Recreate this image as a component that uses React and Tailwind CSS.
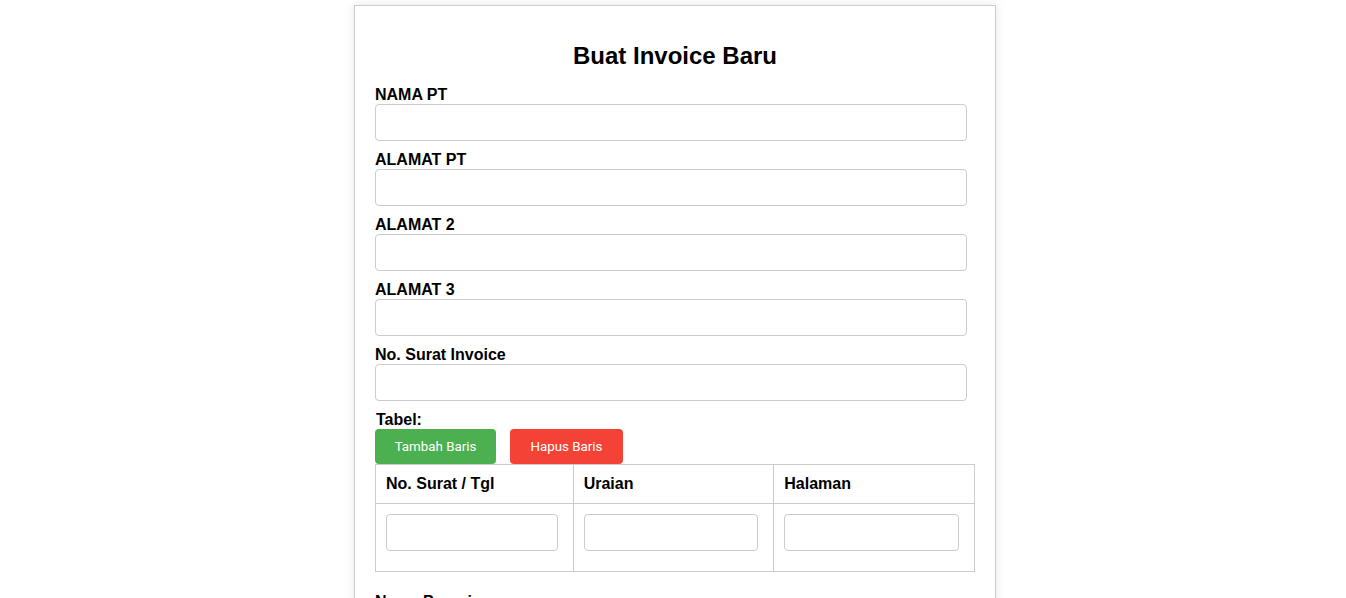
export default function App() {
  const fields = ["NAMA PT", "ALAMAT PT", "ALAMAT 2", "ALAMAT 3", "No. Surat Invoice"];
  const after = ["Nama Penerima", "Jabatan", "Tanggal"];

  const Field = ({ label }) => (
    <div>
      <label className="block text-[16px] leading-[19px] font-bold text-black">{label}</label>
      <input
        type="text"
        className="block w-[592px] h-[37px] mb-[9px] px-2 border border-[#ccc] rounded-[4px] bg-white outline-none"
      />
    </div>
  );

  return (
    <div className="min-h-screen bg-white pt-[5px] pl-[4px] font-['Liberation_Sans',Arial,sans-serif]">
      <div className="w-[642px] mx-auto bg-white border border-[#ccc] shadow-[0_0_10px_rgba(0,0,0,0.1)] px-[20px] pt-[20px] pb-[40px]">
        <h2 className="text-[24px] leading-[27.6px] font-bold text-center text-black mt-[16px] mb-[15px]">
          Buat Invoice Baru
        </h2>

        {fields.map((f) => (
          <Field key={f} label={f} />
        ))}

        <label className="block text-[16px] leading-[19.5px] font-bold text-black ml-px">Tabel:</label>
        <div className="flex gap-[14px]">
          <button className="w-[121px] h-[35px] rounded-[4px] bg-[#4CAF50] text-white text-[13.33px] text-center font-['Roboto',sans-serif]">
            Tambah Baris
          </button>
          <button className="w-[113px] h-[35px] rounded-[4px] bg-[#f44336] text-white text-[13.33px] text-center font-['Roboto',sans-serif]">
            Hapus Baris
          </button>
        </div>

        <table className="w-[600px] border-collapse border border-[#ccc] mb-[20px]">
          <thead>
            <tr>
              <th className="w-[198px] h-[39px] border border-[#ccc] px-[10px] text-left text-[16px] font-bold">No. Surat / Tgl</th>
              <th className="w-[201px] h-[39px] border border-[#ccc] px-[10px] text-left text-[16px] font-bold">Uraian</th>
              <th className="w-[201px] h-[39px] border border-[#ccc] px-[10px] text-left text-[16px] font-bold">Halaman</th>
            </tr>
          </thead>
          <tbody>
            <tr>
              <td className="align-top border border-[#ccc] px-[10px] pt-[10px] pb-[20px]">
                <input type="text" className="block w-[172px] h-[37px] border border-[#ccc] rounded-[4px] outline-none" />
              </td>
              <td className="align-top border border-[#ccc] px-[10px] pt-[10px] pb-[20px]">
                <input type="text" className="block w-[174px] h-[37px] border border-[#ccc] rounded-[4px] outline-none" />
              </td>
              <td className="align-top border border-[#ccc] px-[10px] pt-[10px] pb-[20px]">
                <input type="text" className="block w-[175px] h-[37px] border border-[#ccc] rounded-[4px] outline-none" />
              </td>
            </tr>
          </tbody>
        </table>

        {after.map((f) => (
          <Field key={f} label={f} />
        ))}
      </div>
    </div>
  );
}
